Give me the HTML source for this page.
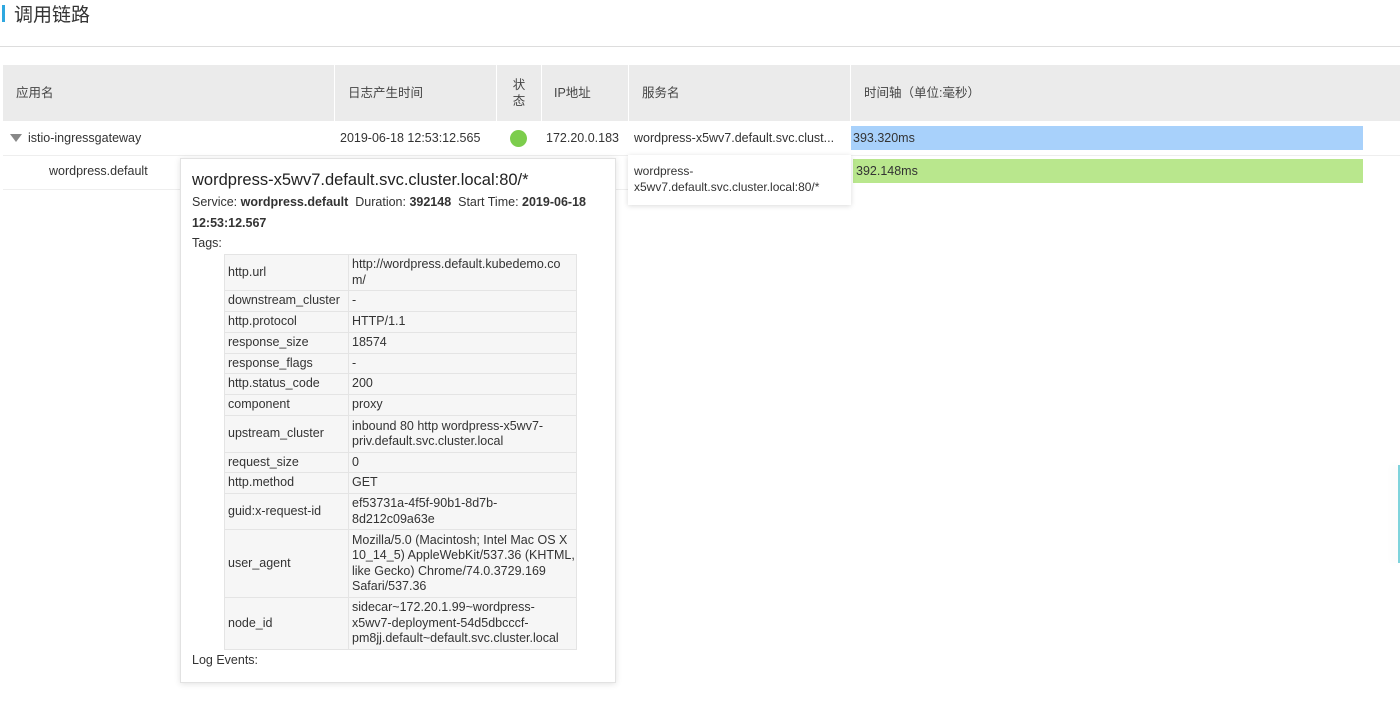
<!DOCTYPE html>
<html><head><meta charset="utf-8"><style>
*{margin:0;padding:0;box-sizing:border-box}
body{width:1400px;height:723px;background:#fff;font-family:"Liberation Sans","Noto Sans CJK SC",sans-serif;color:#333;position:relative;overflow:hidden;font-size:13px}
.a{position:absolute}
.title{left:14px;top:0px;font-size:19px;color:#333}
.bar{left:2px;top:5px;width:3px;height:17px;background:#2fa8e0}
.hline{left:0;top:46px;width:1400px;height:1px;background:#ddd}
.thead{left:3px;top:65px;width:1397px;height:56px;background:#ebebeb}
.th{top:65px;height:56px;line-height:56px;font-size:12.5px;color:#444;border-right:1px solid #fff}
.cell{font-size:12.5px;color:#333;white-space:nowrap}
.pop{left:180px;top:158px;width:436px;height:525px;background:#fff;border:1px solid #e2e2e2;box-shadow:0 1px 6px rgba(0,0,0,.12)}
table{border-collapse:collapse;position:absolute;left:43px;top:95px;width:353px;font-size:12.5px;table-layout:fixed}
td{border:1px solid #e4e4e4;background:#f6f6f6;padding:0 3px;line-height:15.5px;vertical-align:middle;white-space:nowrap;overflow:hidden}
td:first-child{width:124px}
</style></head><body>
<div class="a bar"></div><div class="a title">调用链路</div>
<div class="a hline"></div>
<div class="a thead"></div>
<div class="a th" style="left:3px;width:332px;padding-left:13px">应用名</div>
<div class="a th" style="left:335px;width:162px;padding-left:13px">日志产生时间</div>
<div class="a th" style="left:497px;width:45px;line-height:16px;padding-top:12px;text-align:center">状<br>态</div>
<div class="a th" style="left:542px;width:87px;padding-left:12px">IP地址</div>
<div class="a th" style="left:629px;width:222px;padding-left:13px">服务名</div>
<div class="a th" style="left:851px;width:549px;padding-left:13px;border:none">时间轴（单位:毫秒）</div>
<div class="a" style="left:3px;top:155px;width:1397px;height:1px;background:#eee"></div>
<div class="a" style="left:3px;top:189px;width:626px;height:1px;background:#eee"></div>
<div class="a" style="left:10px;top:134px;width:0;height:0;border-left:6px solid transparent;border-right:6px solid transparent;border-top:8px solid #888"></div>
<div class="a cell" style="left:28px;top:131px">istio-ingressgateway</div>
<div class="a cell" style="left:340px;top:131px">2019-06-18 12:53:12.565</div>
<div class="a" style="left:510px;top:130px;width:17px;height:17px;border-radius:50%;background:#7ccd4c"></div>
<div class="a cell" style="left:546px;top:131px">172.20.0.183</div>
<div class="a cell" style="left:634px;top:131px">wordpress-x5wv7.default.svc.clust...</div>
<div class="a" style="left:851px;top:126px;width:512px;height:24px;background:#a8d1fb;font-size:12.5px;line-height:24px;padding-left:2px">393.320ms</div>
<div class="a cell" style="left:49px;top:164px">wordpress.default</div>
<div class="a" style="left:853px;top:159px;width:510px;height:24px;background:#b9e78d;font-size:12.5px;line-height:24px;padding-left:3px">392.148ms</div>
<div class="a" style="left:628px;top:155px;width:223px;height:50px;background:#fff;box-shadow:0 1px 5px rgba(0,0,0,.15);font-size:12px;line-height:16px;padding:8px 6px">wordpress-<br>x5wv7.default.svc.cluster.local:80/*</div>
<div class="a pop">
<div class="a" style="left:11px;top:12px;font-size:16.5px;color:#222">wordpress-x5wv7.default.svc.cluster.local:80/*</div>
<div class="a" style="left:11px;top:33px;font-size:12.5px;line-height:21px;width:410px">Service: <b>wordpress.default</b>&nbsp; Duration: <b>392148</b>&nbsp; Start Time: <b>2019-06-18 12:53:12.567</b></div>
<div class="a" style="left:11px;top:77px;font-size:12.5px">Tags:</div>
<table>
<tr style="height:36px"><td>http.url</td><td>http://wordpress.default.kubedemo.co<br>m/</td></tr>
<tr style="height:21px"><td>downstream_cluster</td><td>-</td></tr>
<tr style="height:21px"><td>http.protocol</td><td>HTTP/1.1</td></tr>
<tr style="height:21px"><td>response_size</td><td>18574</td></tr>
<tr style="height:20px"><td>response_flags</td><td>-</td></tr>
<tr style="height:21px"><td>http.status_code</td><td>200</td></tr>
<tr style="height:21px"><td>component</td><td>proxy</td></tr>
<tr style="height:37px"><td>upstream_cluster</td><td>inbound 80 http wordpress-x5wv7-<br>priv.default.svc.cluster.local</td></tr>
<tr style="height:20px"><td>request_size</td><td>0</td></tr>
<tr style="height:21px"><td>http.method</td><td>GET</td></tr>
<tr style="height:36px"><td>guid:x-request-id</td><td>ef53731a-4f5f-90b1-8d7b-<br>8d212c09a63e</td></tr>
<tr style="height:68px"><td>user_agent</td><td>Mozilla/5.0 (Macintosh; Intel Mac OS X<br>10_14_5) AppleWebKit/537.36 (KHTML,<br>like Gecko) Chrome/74.0.3729.169<br>Safari/537.36</td></tr>
<tr style="height:52px"><td>node_id</td><td>sidecar~172.20.1.99~wordpress-<br>x5wv7-deployment-54d5dbcccf-<br>pm8jj.default~default.svc.cluster.local</td></tr>
</table>
<div class="a" style="left:11px;top:494px;font-size:12.5px">Log Events:</div>
</div>
<div class="a" style="left:1398px;top:465px;width:2px;height:98px;background:#7fd3dc;box-shadow:-4px 0 8px rgba(0,0,0,.08)"></div>
</body></html>
